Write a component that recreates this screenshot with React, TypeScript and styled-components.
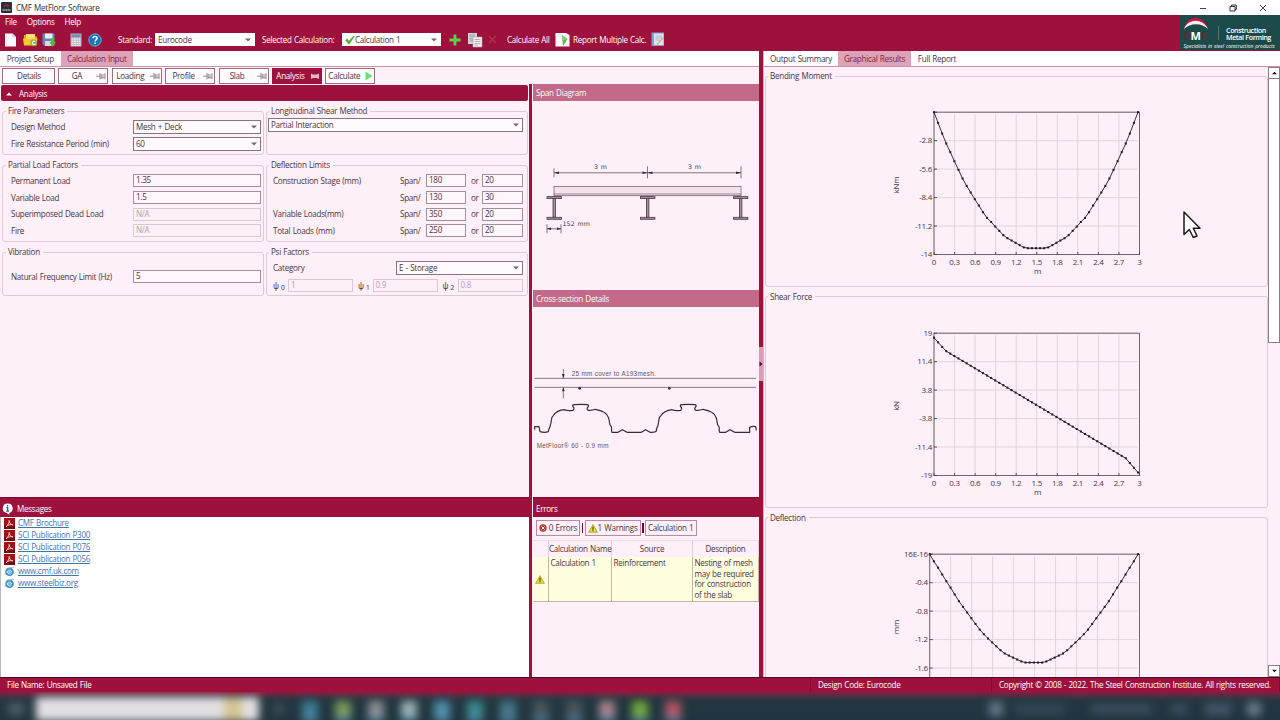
import {FC, ReactNode} from "react";
import styled, {createGlobalStyle, css} from "styled-components";

const colors = {
  crimson: "#9e113c",
  crimsonDark: "#7d0b30",
  rose: "#c26a87",
  tab: "#dea3b8",
  pink: "#fdf0f8",
  text: "#4c3440",
  border: "#e0c8d5"
};

const GlobalStyle = createGlobalStyle`
  * {
    box-sizing: border-box;
  }

  body {
    margin: 0;
    overflow: hidden;
    background-color: ${colors.pink};
    font-family: "Open Sans", "Noto Sans", sans-serif;
    font-size: 8.1px;
    letter-spacing: -0.28px;
    word-spacing: 0.5px;
    line-height: 12px;
    color: ${colors.text};
  }
`;

const Window = styled.div`
  width: 1280px;
  height: 720px;
  display: flex;
  flex-direction: column;
  overflow: hidden;
  white-space: nowrap;
`;

const TitleBar = styled.div`
  height: 15px;
  display: flex;
  align-items: center;
  gap: 4px;
  padding: 0 13px 0 1px;
  background-color: white;
  color: #333;
`;

const WindowButtons = styled.div`
  display: flex;
  gap: 22px;
  margin-left: auto;
`;

const Header = styled.header`
  height: 36px;
  display: flex;
  justify-content: space-between;
  background-color: ${colors.crimson};
  color: white;
`;

const MenuBar = styled.nav`
  height: 14px;
  display: flex;
  align-items: center;
  gap: 10px;
  padding-left: 5px;
`;

const ToolBar = styled.div`
  height: 21px;
  display: flex;
  align-items: center;
  padding-left: 4px;
`;

const Slot = styled.div<{ w: number }>`
  width: ${props => props.w}px;
  flex: none;
  display: flex;
  align-items: center;
`;

const Brand = styled.div`
  width: 100px;
  height: 35px;
  background-color: #1c4a48;
`;

const ComboBox = styled.div<{ w?: number, plain?: boolean, h?: number }>`
  width: ${props => props.w ? props.w + "px" : "100%"};
  height: ${props => props.h || 14}px;
  flex: none;
  display: flex;
  align-items: center;
  padding: 0 3px ${props => props.plain ? 0 : 1}px 2px;
  background-color: ${props => props.plain ? "white" : "#fffafd"};
  border: 1px solid ${props => props.plain ? "#fff" : "#85757f"};
  color: ${colors.text};

  & > svg:last-child {
    margin-left: auto;
  }
`;

const Main = styled.div`
  height: 626px;
  display: flex;
`;

const Workspace = styled.div`
  width: 759px;
  display: flex;
  flex-direction: column;
`;

const Tabs = styled.div`
  height: 16px;
  flex: none;
  display: flex;
  background-color: white;
  border-bottom: 1px solid #d78ba6;
`;

const Tab = styled.div<{ w: number, active?: boolean }>`
  width: ${props => props.w}px;
  height: 15px;
  line-height: 15px;
  text-align: center;
  background-color: ${props => props.active ? colors.tab : "white"};
  color: ${props => props.active ? "#7a1f42" : colors.text};
`;

const Steps = styled.div`
  height: 17px;
  flex: none;
  display: flex;
  gap: 3.4px;
  padding: 1px 0 0 2px;
`;

const Step = styled.div<{ active?: boolean, centered?: boolean }>`
  width: ${props => props.centered ? 53 : 50}px;
  height: 16px;
  display: flex;
  align-items: center;
  justify-content: ${props => props.centered ? "center" : "space-between"};
  padding: 0 1px 1px 2px;
  border: 1px solid ${props => props.active ? colors.crimson : "#8d7480"};
  background-color: ${props => props.active ? colors.crimson : "#fffafd"};
  color: ${props => props.active ? "white" : colors.text};

  & > span {
    flex: 1;
    padding-right: 4px;
    text-align: center;
  }
`;

const Columns = styled.div`
  flex: 1;
  display: flex;
  min-height: 0;
`;

const LeftColumn = styled.div`
  width: 529px;
  display: flex;
  flex-direction: column;
`;

const MiddleColumn = styled.div`
  width: 230px;
  display: flex;
  flex-direction: column;
  border-left: 3px solid ${colors.crimson};
  padding-left: 1px;
`;

const AnalysisHeader = styled.div`
  height: 16px;
  flex: none;
  display: flex;
  align-items: center;
  gap: 7px;
  margin: 1px 1px 0;
  padding: 1px 0 0 5px;
  border-radius: 2px;
  background-color: ${colors.crimson};
  color: white;
`;

const Form = styled.div`
  height: 396px;
  flex: none;
  display: grid;
  grid-template-columns: 262px 262px;
  grid-template-rows: 50px 83px 50px;
  gap: 4px 2px;
  align-content: start;
  padding: 4px 0 0 2px;
`;

const GroupBox = styled.fieldset<{ h?: number, narrow?: boolean }>`
  min-width: 0;
  margin: 0;
  padding: 0 0 0 ${props => props.narrow ? 1 : 3}px;
  border: 1px solid ${colors.border};
  border-radius: 3px;
  ${props => props.h && css`
    height: ${props.h}px;
    flex: none;
    padding: 0;
  `}
`;

const Legend = styled.legend<{ indent?: number }>`
  height: 12px;
  margin-left: ${props => props.indent || 0}px;
  padding: 0 3px 0 2px;
`;

const Row = styled.div<{ top?: number }>`
  height: 16.7px;
  display: flex;
  align-items: center;
  margin-top: ${props => props.top || 0}px;
  padding-left: 5px;
`;

const FlushRow = styled(Row)`
  padding-left: 0;
`;

const Label = styled.span<{ w: number }>`
  width: ${props => props.w}px;
  flex: none;
`;

const OrLabel = styled(Label)`
  padding-left: 5px;
`;

const PsiLabel = styled(Label)`
  padding-left: ${props => props.w > 15 ? 5 : 0}px;
  padding-top: 2px;
  font-family: "Noto Sans", sans-serif;
  letter-spacing: 0;

  & > sub {
    font-size: 6.5px;
    line-height: 0;
    vertical-align: -0.5px;
    margin-left: 2px;
  }
`;

const Field = styled.div<{ w: number, disabled?: boolean }>`
  width: ${props => props.w}px;
  height: 13px;
  flex: none;
  padding-left: 2px;
  line-height: 10.5px;
  border: 1px solid ${props => props.disabled ? "#dcc8d3" : "#a38f9a"};
  color: ${props => props.disabled ? "#b5a2ad" : colors.text};
  background-color: ${props => props.disabled ? colors.pink : "#fff6fb"};
`;

const PanelTitle = styled.div`
  height: 17px;
  flex: none;
  padding-left: 3px;
  line-height: 17px;
  background-color: ${colors.rose};
  color: white;
`;

const Drawing = styled.svg`
  display: block;
  flex: none;
`;

const DockTitle = styled.div`
  height: 19.5px;
  flex: none;
  display: flex;
  align-items: center;
  gap: 4px;
  padding: 3px 0 0 2px;
  border-top: 1px solid ${colors.crimsonDark};
  background-color: ${colors.crimson};
  color: white;
`;

const ErrorsTitle = styled(DockTitle)`
  padding-left: 3px;
`;

const Messages = styled.div`
  flex: 1;
  padding-top: 0.5px;
  background-color: white;
  border-left: 1px solid #bbb;
`;

const MessageLink = styled.div`
  height: 12px;
  display: flex;
  align-items: center;
  gap: 3px;
  padding-left: 3px;

  & > a {
    color: #3f76ad;
    text-decoration: underline;
    text-underline-offset: 1px;
  }
`;

const ErrorFilters = styled.div`
  height: 23.5px;
  flex: none;
  display: flex;
  align-items: center;
  gap: 1.5px;
  padding-left: 3px;
`;

const FilterButton = styled.div<{ w: number }>`
  width: ${props => props.w}px;
  height: 16px;
  display: flex;
  align-items: center;
  justify-content: space-between;
  padding: 0 2px;
  border: 1px solid #b98aa0;
`;

const FilterDivider = styled.div`
  width: 1.5px;
  height: 10px;
  background-color: ${colors.crimsonDark};
`;

const ErrorGrid = styled.div`
  display: grid;
  grid-template-columns: 16px 63px 81px 66px;
  grid-template-rows: 16px 45px;
  border-top: 1px solid #eedbe5;
`;

const ErrorHead = styled.div`
  text-align: center;
  line-height: 16px;
  border-right: 1px solid #e3cdd8;
`;

const ErrorCell = styled.div`
  padding: 1px 0 0 1.5px;
  line-height: 10.7px;
  white-space: pre-line;
  background-color: #ffffe0;
  border-right: 1px solid #c9b3a4;
  border-bottom: 1px solid #c9b3a4;
`;

const ErrorIconCell = styled(ErrorCell)`
  display: flex;
  align-items: center;
  padding: 0 0 0 2px;
`;

const Splitter = styled.div`
  width: 5px;
  display: flex;
  align-items: center;
  background-color: ${colors.crimson};
  border-right: 1px solid #e5a9bf;
`;

const SplitterGrip = styled.div`
  width: 4px;
  height: 34px;
  display: flex;
  align-items: center;
  background-color: #e09ab4;
`;

const Results = styled.div`
  width: 516px;
  display: flex;
  flex-direction: column;
`;

const ResultsBody = styled.div`
  flex: 1;
  min-height: 0;
  display: flex;
`;

const ChartList = styled.div`
  width: 504px;
  display: flex;
  flex-direction: column;
  gap: 3.6px;
  padding: 3.4px 0 0 1px;
  overflow: hidden;
`;

const ScrollBar = styled.div`
  width: 12px;
  display: flex;
  flex-direction: column;
`;

const ScrollButton = styled.div`
  height: 12px;
  display: flex;
  align-items: center;
  justify-content: center;
  border: 1px solid #8b7b84;
  background-color: white;
`;

const ScrollThumb = styled.div`
  height: 264px;
  margin-bottom: auto;
  border: 1px solid #8b7b84;
  border-top: 0;
  background-color: white;
`;

const StatusBar = styled.footer`
  height: 15px;
  flex: none;
  display: flex;
  border-top: 1px solid #52091f;
  background-color: ${colors.crimson};
  color: white;
`;

const StatusItem = styled.div<{ w: number }>`
  width: ${props => props.w}px;
  padding-left: 7px;
  line-height: 14px;
  border-right: 1px solid #830c31;
`;

const TaskBar = styled.div`
  height: 28px;
  flex: none;
  overflow: hidden;
  background: linear-gradient(#8c1a3e 0, #5b2c41 3px, #2f3642 7px, #233741 10px, #20353f 100%);
`;

const TaskBarItems = styled.div`
  height: 28px;
  display: flex;
  align-items: center;
  padding: 5px 0 0 8px;
  filter: blur(4px);
`;

const TaskItem = styled.div<{ w: number, h?: number, color: string, gap?: number, open?: boolean }>`
  width: ${props => props.w}px;
  height: ${props => props.h || 14}px;
  flex: none;
  margin-left: ${props => props.gap || 0}px;
  background-color: ${props => props.color};
  box-shadow: ${props => props.open ? "0 5px 0 #4f86a6" : "none"};
`;

const Cursor = styled.svg`
  position: absolute;
  left: 1182px;
  top: 210px;
`;

const Arrow: FC<{ up?: boolean, color?: string, size?: number }> = ({up, color = "#75646e", size = 6}) => (
  <svg width={size} height="4" viewBox="0 0 6 4">
    <path d={up ? "M0 3.5L3 .5L6 3.5Z" : "M0 .5H6L3 3.5Z"} fill={color}/>
  </svg>
);

const Pin: FC<{ active?: boolean }> = ({active}) => (
  <svg width="10" height="8" viewBox="0 0 10 8">
    {active
      ? <path d="M1 1.5L3 2.5H7L9 1.5V7L7 6H3L1 7Z" fill="#e6b9c8"/>
      : <path d="M0 4.2H4M4 1V7.4M5 2V6.5M5 3H8.6M5 5H8.6M5 5.9H8.6M9 1.2V7.2" stroke="#8f8289" strokeWidth=".9" fill="none"/>}
  </svg>
);

const WarningIcon = () => (
  <svg width="10" height="9" viewBox="0 0 10 9">
    <path d="M5 .6L9.5 8.3H.5Z" fill="#e6df2c" stroke="#9c9830" strokeWidth=".7" strokeLinejoin="round"/>
    <path d="M5 2.8V5.7M5 6.3V7.3" stroke="#3b3a16" strokeWidth="1.1"/>
  </svg>
);

const PdfIcon = () => (
  <svg width="11" height="11" viewBox="0 0 11 11">
    <rect width="11" height="11" fill="#a60f14"/>
    <rect y="7" width="11" height="4" fill="#7d0a10"/>
    <path d="M2 8.8C4 7.4 5.4 4.6 5.2 2.4C5.2 4.8 6.6 6.6 9 6.9C6.6 6.3 4 6.8 2 8.8Z" fill="none" stroke="#f3d5d5" strokeWidth=".9"/>
  </svg>
);

const WebIcon = () => (
  <svg width="11" height="11" viewBox="0 0 11 11">
    <circle cx="5.5" cy="5.8" r="4.3" fill="#3a8cc0"/>
    <path d="M3.3 6H7.7C7.6 3.5 3.6 3.4 3.3 6C3.4 8.3 6.6 8.6 7.6 7.2" fill="none" stroke="#d7f1fb" strokeWidth="1"/>
    <path d="M1 8.8C2 4.5 6 1 10.2 1.2" fill="none" stroke="#7cb6d8" strokeWidth=".9"/>
  </svg>
);

const NewIcon = () => (
  <svg width="13" height="14" viewBox="0 0 13 14">
    <path d="M1 .5H8.5L12 4V13.5H1Z" fill="#fdfbfc"/>
    <path d="M8.5 .5V4H12Z" fill="#d5c8cd"/>
  </svg>
);

const OpenIcon = () => (
  <svg width="15" height="14" viewBox="0 0 15 14">
    <path d="M1 2H6L7 3.5H14V12H1Z" fill="#e2a91c"/>
    <path d="M3 1H12V6H3Z" fill="#f5df7a"/>
    <path d="M0 5.5H14.5L13.5 12.5H1Z" fill="#f6c92f"/>
    <circle cx="10.8" cy="9.8" r="3.4" fill="#86b83a"/>
    <path d="M12.4 8.6C10.8 7.4 9 8.8 9.4 10.4C9.8 11.8 11.8 11.8 12.4 10.8" fill="none" stroke="#fff" strokeWidth="1.1"/>
  </svg>
);

const SaveIcon = () => (
  <svg width="14" height="14" viewBox="0 0 14 14">
    <path d="M.5 .5H12.5V12.5H2L.5 11Z" fill="#5f89ae"/>
    <rect x="3" y=".5" width="7.5" height="5" fill="#e9f0f5"/>
    <rect x="3" y="8" width="6.5" height="5" fill="#cfdbe4"/>
    <path d="M9.2 5H12.2V9H14L10.7 13.7L7.3 9H9.2Z" fill="#54bb3f"/>
  </svg>
);

const CalculatorIcon = () => (
  <svg width="12" height="14" viewBox="0 0 12 14">
    <rect x=".5" y=".5" width="11" height="13" fill="#b8b0ba"/>
    <rect x="1.5" y="1.5" width="9" height="2.6" fill="#6d92b8"/>
    <path d="M1.5 6H10.5M1.5 8.2H10.5M1.5 10.4H10.5M1.5 12.4H10.5" stroke="#ece8ec" strokeWidth="1.4" strokeDasharray="2 .5"/>
  </svg>
);

const HelpIcon = () => (
  <svg width="14" height="14" viewBox="0 0 14 14">
    <circle cx="7" cy="7" r="6.2" fill="#1477b5" stroke="#73b5da" strokeWidth=".9"/>
    <path d="M4.9 5.3C5 2.8 9.3 2.9 9.1 5.3C9 6.6 7.1 6.7 7.1 8.5M7.1 9.6V11" fill="none" stroke="#fff" strokeWidth="1.5"/>
  </svg>
);

const CheckIcon = () => (
  <svg width="10" height="10" viewBox="0 0 9 9">
    <path d="M.2 4.6L2.2 3.2L3.4 5.3L8 .4L8.9 1L3.6 8.8Z" fill="#58a62b"/>
  </svg>
);

const CopyIcon = () => (
  <svg width="16" height="16" viewBox="0 0 16 16">
    <path d="M1 1H10V12H1Z" fill="#d9d4d9"/>
    <path d="M2.5 3H8M2.5 5H8M2.5 7H8M2.5 9H8" stroke="#8d8790" strokeWidth=".8"/>
    <path d="M6 5H15V15H6Z" fill="#f1eff2" stroke="#b3a9b1" strokeWidth=".6"/>
    <path d="M7.5 7.5H13.5M7.5 9.5H13.5M7.5 11.5H13.5M7.5 13.2H11" stroke="#a8a3ab" strokeWidth=".8"/>
  </svg>
);

const RunIcon = () => (
  <svg width="15" height="15" viewBox="0 0 15 15">
    <path d="M.5 1H11L14.5 3V14.5H.5Z" fill="#fcf9fb"/>
    <path d="M7 3L12.5 7L8 14Z" fill="#62b34c"/>
    <path d="M7 3L12.5 7L7 9Z" fill="#8fd079"/>
  </svg>
);

const ReportIcon = () => (
  <svg width="14" height="15" viewBox="0 0 14 15">
    <rect x=".5" y=".5" width="12.5" height="13.5" fill="#7ba3cd"/>
    <rect x="3" y="1.5" width="9.5" height="11.5" fill="#dde6ef"/>
    <path d="M4.5 4H11M4.5 6H11M4.5 8H9" stroke="#9db3c9" strokeWidth=".8"/>
    <path d="M12.8 6L6.8 12.6L5.6 13.4L6 12L12 5.3Z" fill="#e3a04a"/>
  </svg>
);

const InfoIcon = () => (
  <svg width="11" height="12" viewBox="0 0 11 12">
    <path d="M5.5 .5A4.8 4.8 0 0 1 7.2 9.9L7.6 11.7L4.6 10A4.8 4.8 0 0 1 5.5 .5Z" fill="#f5f8fc"/>
    <path d="M5.5 2V3.5M4.4 4.7H5.7V8M4.2 8.2H7" stroke="#2d5c9c" strokeWidth="1.3" fill="none"/>
  </svg>
);

const BrandLogo = () => (
  <Drawing width="100" height="35" viewBox="0 0 100 35" fontFamily="Open Sans, sans-serif">
    <path d="M4 14C7 -1 24 -1 28 14C22 7 10 7 4 14Z" fill="#c8143f"/>
    <path d="M4 14C8 3 23 3 28 14C22 7.5 10 7.5 4 14Z" fill="#f6eef0"/>
    <text x="3.5" y="25" fontSize="10" fontWeight="700" fill="#7a1a3a">C</text>
    <text x="10.5" y="25" fontSize="11" fontWeight="700" fill="#fff">M</text>
    <text x="21.5" y="25" fontSize="10" fontWeight="700" fill="#7a1a3a">F</text>
    <path d="M38.5 11V25" stroke="#6f8b89" strokeWidth=".7"/>
    <g fill="#fff">
      <text x="46" y="17.5" fontSize="7.2" fontWeight="600" textLength="40">Construction</text>
      <text x="46" y="25" fontSize="7.2" fontWeight="600" textLength="45">Metal Forming</text>
      <text x="3.5" y="32.7" fontSize="5" fontStyle="italic" textLength="91">Specialists in steel construction products</text>
    </g>
  </Drawing>
);

const Beam: FC<{ x: number }> = ({x}) => (
  <g fill="#a58d9b" stroke="#4b3a44" strokeWidth=".8">
    <rect x={x - 1} y="98" width="2.4" height="19"/>
    <rect x={x - 7} y="96.3" width="14.4" height="2"/>
    <rect x={x - 7} y="117" width="14.4" height="2"/>
  </g>
);

const SpanDiagram = () => (
  <Drawing width="226" height="189" viewBox="0 .7 226 189" fontFamily="DejaVu Sans, sans-serif" fontSize="6.3">
    <rect x="21" y="86.3" width="187" height="7.4" fill="#f6e0ec" stroke="#6d5964" strokeWidth=".7"/>
    <path d="M21 95.3H208M21 93.7V95.3M208 93.7V95.3" stroke="#6d5964" strokeWidth=".8"/>
    <path d="M21 68V77M114.5 66V78M208 66V78M21 72.5H208" stroke="#51404a" strokeWidth=".7"/>
    <path d="M21 72.5L26 71.2V73.8ZM114.5 72.5L109.5 71.2V73.8ZM114.5 72.5L119.5 71.2V73.8ZM208 72.5L203 71.2V73.8Z" fill="#33232c"/>
    <Beam x={21}/>
    <Beam x={114.5}/>
    <Beam x={207.5}/>
    <path d="M14 124V133M28 124V133M14 128.5H28" stroke="#51404a" strokeWidth=".7"/>
    <path d="M14 128.5L18 127.3V129.7ZM28 128.5L24 127.3V129.7Z" fill="#33232c"/>
    <g fill="#4c3440">
      <text x="61" y="69.2" textLength="12.5">3 m</text>
      <text x="155" y="69.2" textLength="12.5">3 m</text>
      <text x="29.5" y="125.5" textLength="27">152 mm</text>
    </g>
  </Drawing>
);

const CrossSection = () => (
  <Drawing width="226" height="190" viewBox="15 51 678 570" fontFamily="Liberation Sans, sans-serif" fontSize="19">
    <path d="M20 265H684M20 292H684M106 237V265M106 292V325" stroke="#6d5964" strokeWidth="2.4"/>
    <path d="M106 265L102 252H110ZM106 292L102 304H110Z" fill="#33232c"/>
    <circle cx="155" cy="295" r="4" fill="#33232c"/>
    <circle cx="424" cy="295" r="4" fill="#33232c"/>
    <path
      d="M20 419V410H33L36 425Q50 429 61 425C62 412 68 412 67 405C72 394 68 382 75 378Q86 360 110 359Q116 363 135 361C140 356 138 352 135 350Q132 345 138 344Q160 342 178 344Q184 346 180 351C176 355 177 359 180 361Q194 362 202 358Q236 364 241 382C246 394 243 404 248 407C254 410 248 418 252 427H270L283 419L297 427H340L353 419L366 427Q382 428 385 423C384 412 391 410 390 405C394 394 390 382 398 378Q408 362 432 359Q440 363 458 361C463 356 461 352 458 350Q455 345 461 344Q483 342 501 344Q507 346 503 351C499 355 500 359 503 361Q517 362 525 358Q559 364 564 382C569 394 566 404 571 407C577 410 571 418 575 427H593L606 419L620 427H665V412Q674 408 683 410L685 421"
      fill="none"
      stroke="#3a2a34"
      strokeWidth="3.6"
      strokeLinejoin="round"
    />
    <g fill="#65505c">
      <text x="131" y="258" textLength="252">25 mm cover to A193mesh.</text>
      <text x="26" y="474" textLength="215">MetFloor® 60 - 0.9 mm</text>
    </g>
  </Drawing>
);

interface ChartProps {
  title: string,
  unit: string,
  values: number[],
  max: number,
  min: number,
  ticks: string[],
  left?: number,
  hideXLabels?: boolean
}

const PLOT_TOP = 30.2;
const PLOT_HEIGHT = 142.3;
const PLOT_RIGHT = 373.5;

const mirror = (half: number[]) => [...half, ...half.slice(0, -1).reverse()];

const bending = mirror([0, -1.05, -2.1, -3.08, -3.93, -4.82, -5.67, -6.52, -7.25, -7.9, -8.56, -9.18, -9.84, -10.4, -10.8, -11.25,
  -11.67, -12.1, -12.4, -12.62, -12.85, -13.08, -13.3, -13.38, -13.38, -13.38]);
const shear = Array.from({length: 51}, (_, i) => {
  if (i < 3) return 17.8 - i * 1.23;
  if (i > 47) return -14.4 - (i - 47) * 1.27;
  return 14.2 - (i - 3) * 0.65;
});
const deflection = mirror([0, -0.1, -0.19, -0.285, -0.38, -0.47, -0.565, -0.66, -0.74, -0.82, -0.9, -0.98, -1.06, -1.125, -1.185,
  -1.24, -1.295, -1.35, -1.395, -1.425, -1.453, -1.48, -1.507, -1.523, -1.523, -1.523]);

const Chart: FC<ChartProps> = ({title, unit, values, max, min, ticks, left = 168, hideXLabels}) => {
  const width = PLOT_RIGHT - left;
  const points = values.map((value, i) => [
    left + i * (width - 1.5) / (values.length - 1),
    PLOT_TOP + (max - value) / (max - min) * PLOT_HEIGHT
  ]);
  const bottom = PLOT_TOP + PLOT_HEIGHT;
  const xTicks = Array.from({length: 11}, (_, i) => ({
    x: left + i * width / 10,
    label: String(Number((i * 0.3).toFixed(1)))
  }));
  const yTicks = ticks.map((label, i) => ({y: PLOT_TOP + i * PLOT_HEIGHT / 5, label}));

  return (
    <GroupBox h={217}>
      <Legend indent={2}>{title}</Legend>
      <Drawing width="500" height="204" viewBox="0 0 500 204" fontSize="8" fill={colors.text}>
        <g stroke="#dccbd5" strokeWidth=".8">
          {xTicks.map(tick => <line key={tick.x} x1={tick.x} x2={tick.x} y1={PLOT_TOP + 2} y2={bottom}/>)}
          {yTicks.map(tick => <line key={tick.y} x1={left} x2={PLOT_RIGHT - 2} y1={tick.y} y2={tick.y}/>)}
        </g>
        <rect x={left} y={PLOT_TOP} width={width} height={PLOT_HEIGHT} fill="none" stroke="#74646d"/>
        <g stroke="#4a3a43" strokeWidth=".9">
          {xTicks.map(tick => <line key={tick.x} x1={tick.x} x2={tick.x} y1={bottom - 2.5} y2={bottom}/>)}
          {yTicks.map(tick => <line key={tick.y} x1={left} x2={left + 3} y1={tick.y} y2={tick.y}/>)}
        </g>
        {!hideXLabels && <>
          {xTicks.map(tick => <text key={tick.x} x={tick.x} y={bottom + 10} textAnchor="middle">{tick.label}</text>)}
          <text x="271.5" y={bottom + 19} textAnchor="middle">m</text>
        </>}
        {yTicks.map(tick => tick.label && (
          <text key={tick.y} x={left - 2} y={tick.y + 2.8} textAnchor="end">{tick.label}</text>
        ))}
        <text transform="translate(133 103) rotate(-90)" textAnchor="middle">{unit}</text>
        <polyline points={points.map(point => point.join(",")).join(" ")} fill="none" stroke="#3f2f38"/>
        {points.map(([x, y], i) => <rect key={i} x={x - 1} y={y - 1} width="2" height="2" fill="#22151c"/>)}
      </Drawing>
    </GroupBox>
  );
};

const LimitRow: FC<{ label?: string, span: string, or: string, top?: number }> = ({label, span, or, top}) => (
  <Row top={top}>
    <Label w={127}>{label}</Label>
    <Label w={26}>Span/</Label>
    <Field w={40}>{span}</Field>
    <OrLabel w={16}>or</OrLabel>
    <Field w={41}>{or}</Field>
  </Row>
);

const FactorRow: FC<{ label: string, value: string, disabled?: boolean, top?: number }> = ({label, value, disabled, top}) => (
  <Row top={top}>
    <Label w={122}>{label}</Label>
    <Field w={128} disabled={disabled}>{value}</Field>
  </Row>
);

const Group: FC<{ title: string, narrow?: boolean, children: ReactNode }> = ({title, narrow, children}) => (
  <GroupBox narrow={narrow}>
    <Legend indent={narrow ? 1 : 0}>{title}</Legend>
    {children}
  </GroupBox>
);

const AnalysisForm = () => (
  <Form>
    <Group title="Fire Parameters">
      <Row top={2}>
        <Label w={122}>Design Method</Label>
        <ComboBox w={128}>Mesh + Deck<Arrow/></ComboBox>
      </Row>
      <Row>
        <Label w={122}>Fire Resistance Period (min)</Label>
        <ComboBox w={128}>60<Arrow/></ComboBox>
      </Row>
    </Group>
    <Group title="Longitudinal Shear Method" narrow>
      <FlushRow>
        <ComboBox w={255}>Partial Interaction<Arrow/></ComboBox>
      </FlushRow>
    </Group>
    <Group title="Partial Load Factors">
      <FactorRow top={1.5} label="Permanent Load" value="1.35"/>
      <FactorRow label="Variable Load" value="1.5"/>
      <FactorRow label="Superimposed Dead Load" value="N/A" disabled/>
      <FactorRow label="Fire" value="N/A" disabled/>
    </Group>
    <Group title="Deflection Limits" narrow>
      <LimitRow top={1.5} label="Construction Stage (mm)" span="180" or="20"/>
      <LimitRow span="130" or="30"/>
      <LimitRow label="Variable Loads(mm)" span="350" or="20"/>
      <LimitRow label="Total Loads (mm)" span="250" or="20"/>
    </Group>
    <Group title="Vibration">
      <FactorRow top={10.5} label="Natural Frequency Limit (Hz)" value="5"/>
    </Group>
    <Group title="Psi Factors" narrow>
      <Row top={2}>
        <Label w={123}>Category</Label>
        <ComboBox w={127}>E - Storage<Arrow/></ComboBox>
      </Row>
      <Row>
        <PsiLabel w={15}>ψ<sub>0</sub></PsiLabel>
        <Field w={65} disabled>1</Field>
        <PsiLabel w={19.5}>ψ<sub>1</sub></PsiLabel>
        <Field w={65} disabled>0.9</Field>
        <PsiLabel w={20}>ψ<sub>2</sub></PsiLabel>
        <Field w={65} disabled>0.8</Field>
      </Row>
    </Group>
  </Form>
);

const documents = ["CMF Brochure", "SCI Publication P300", "SCI Publication P076", "SCI Publication P056"];
const sites = ["www.cmf.uk.com", "www.steelbiz.org"];
const steps = ["GA", "Loading", "Profile", "Slab", "Analysis"];
const taskIcons = ["#3f7f98", "#7d9b5d", "#8e9092", "#9ab2b4", "#5190ad", "#3d8b91", "#467887", "#4b565c", "#4b565c", "#a9828a", "#76a83d", "#b45563"];

const App: FC = () => (
  <Window>
    <GlobalStyle/>
    <TitleBar>
      <svg width="11" height="11" viewBox="0 0 11 11">
        <rect width="11" height="11" rx="1" fill="#263238"/>
        <path d="M2 4.5Q5.5 0 9 4.5Z" fill="#a3193f"/>
        <path d="M1.5 8H9.5" stroke="#aeb9bb" strokeWidth="1.6" strokeDasharray="1.3 .4"/>
      </svg>
      CMF MetFloor Software
      <WindowButtons>
        <svg width="8" height="8" viewBox="0 0 8 8"><path d="M1 4.5H7" stroke="#444"/></svg>
        <svg width="8" height="8" viewBox="0 0 8 8"><path d="M1 2.5H6V7H1ZM2.5 2.5V1H7.3V5.5H6" fill="none" stroke="#333"/></svg>
        <svg width="8" height="8" viewBox="0 0 8 8"><path d="M1 1L7 7M7 1L1 7" stroke="#333" strokeWidth=".9"/></svg>
      </WindowButtons>
    </TitleBar>
    <Header>
      <div>
        <MenuBar>
          <span>File</span>
          <span>Options</span>
          <span>Help</span>
        </MenuBar>
        <ToolBar>
          <Slot w={19}><NewIcon/></Slot>
          <Slot w={19}><OpenIcon/></Slot>
          <Slot w={28}><SaveIcon/></Slot>
          <Slot w={18}><CalculatorIcon/></Slot>
          <Slot w={30}><HelpIcon/></Slot>
          <Slot w={37}>Standard:</Slot>
          <Slot w={107}><ComboBox w={100} h={13} plain>Eurocode<Arrow/></ComboBox></Slot>
          <Slot w={80}>Selected Calculation:</Slot>
          <Slot w={107}><ComboBox w={99} h={13} plain><CheckIcon/>Calculation 1<Arrow/></ComboBox></Slot>
          <Slot w={18}>
            <svg width="12" height="12" viewBox="0 0 12 12"><path d="M6 .5V11.5M.5 6H11.5" stroke="#62cf4b" strokeWidth="2.8"/></svg>
          </Slot>
          <Slot w={21}><CopyIcon/></Slot>
          <Slot w={19}>
            <svg width="9" height="9" viewBox="0 0 9 9"><path d="M1 1L8 8M8 1L1 8" stroke="#b0344f" strokeWidth="1.3"/></svg>
          </Slot>
          <Slot w={48}>Calculate All</Slot>
          <Slot w={18}><RunIcon/></Slot>
          <Slot w={78}>Report Multiple Calc.</Slot>
          <Slot w={16}><ReportIcon/></Slot>
        </ToolBar>
      </div>
      <Brand><BrandLogo/></Brand>
    </Header>
    <Main>
      <Workspace>
        <Tabs>
          <Tab w={60.5}>Project Setup</Tab>
          <Tab w={72.5} active>Calculation Input</Tab>
        </Tabs>
        <Steps>
          <Step centered>Details</Step>
          {steps.map(step => (
            <Step key={step} active={step === "Analysis"}>
              <span>{step}</span>
              <Pin active={step === "Analysis"}/>
            </Step>
          ))}
          <Step>
            Calculate
            <svg width="8" height="10" viewBox="0 0 8 10"><path d="M.5 .5L7.5 5L.5 9.5Z" fill="#6fe26c"/></svg>
          </Step>
        </Steps>
        <Columns>
          <LeftColumn>
            <AnalysisHeader><Arrow up color="#fff"/>Analysis</AnalysisHeader>
            <AnalysisForm/>
            <DockTitle><InfoIcon/>Messages</DockTitle>
            <Messages>
              {documents.map(name => <MessageLink key={name}><PdfIcon/><a>{name}</a></MessageLink>)}
              {sites.map(name => <MessageLink key={name}><WebIcon/><a>{name}</a></MessageLink>)}
            </Messages>
          </LeftColumn>
          <MiddleColumn>
            <PanelTitle>Span Diagram</PanelTitle>
            <SpanDiagram/>
            <PanelTitle>Cross-section Details</PanelTitle>
            <CrossSection/>
            <ErrorsTitle>Errors</ErrorsTitle>
            <ErrorFilters>
              <FilterButton w={44}>
                <svg width="8" height="8" viewBox="0 0 8 8">
                  <circle cx="4" cy="4" r="3.7" fill="#c03a2e"/>
                  <path d="M2.5 2.5L5.5 5.5M5.5 2.5L2.5 5.5" stroke="#fff"/>
                </svg>
                0 Errors
              </FilterButton>
              <FilterDivider/>
              <FilterButton w={56}><WarningIcon/>1 Warnings</FilterButton>
              <FilterDivider/>
              <FilterButton w={52}>Calculation 1</FilterButton>
            </ErrorFilters>
            <ErrorGrid>
              <ErrorHead/>
              <ErrorHead>Calculation Name</ErrorHead>
              <ErrorHead>Source</ErrorHead>
              <ErrorHead>Description</ErrorHead>
              <ErrorIconCell><WarningIcon/></ErrorIconCell>
              <ErrorCell>Calculation 1</ErrorCell>
              <ErrorCell>Reinforcement</ErrorCell>
              <ErrorCell>{"Nesting of mesh\nmay be required\nfor construction\nof the slab"}</ErrorCell>
            </ErrorGrid>
          </MiddleColumn>
        </Columns>
      </Workspace>
      <Splitter>
        <SplitterGrip>
          <svg width="4" height="6" viewBox="0 0 4 6"><path d="M.5 .5L3.5 3L.5 5.5Z" fill="#4a1026"/></svg>
        </SplitterGrip>
      </Splitter>
      <Results>
        <Tabs>
          <Tab w={74}>Output Summary</Tab>
          <Tab w={73} active>Graphical Results</Tab>
          <Tab w={52}>Full Report</Tab>
        </Tabs>
        <ResultsBody>
          <ChartList>
            <Chart title="Bending Moment" unit="kNm" values={bending} max={0} min={-14}
                   ticks={["", "-2.8", "-5.6", "-8.4", "-11.2", "-14"]}/>
            <Chart title="Shear Force" unit="kN" values={shear} max={19} min={-19}
                   ticks={["19", "11.4", "3.8", "-3.8", "-11.4", "-19"]}/>
            <Chart title="Deflection" unit="mm" values={deflection} max={0} min={-2} left={163.7} hideXLabels
                   ticks={["16E-16", "-0.4", "-0.8", "-1.2", "-1.6"]}/>
          </ChartList>
          <ScrollBar>
            <ScrollButton><Arrow up color="#111" size={5}/></ScrollButton>
            <ScrollThumb/>
            <ScrollButton><Arrow color="#111" size={5}/></ScrollButton>
          </ScrollBar>
        </ResultsBody>
      </Results>
    </Main>
    <StatusBar>
      <StatusItem w={811}>File Name: Unsaved File</StatusItem>
      <StatusItem w={181}>Design Code: Eurocode</StatusItem>
      <StatusItem w={288}>Copyright © 2008 - 2022. The Steel Construction Institute. All rights reserved.</StatusItem>
    </StatusBar>
    <TaskBar>
      <TaskBarItems>
        <TaskItem w={16} h={12} color="#4d5d64"/>
        <TaskItem w={188} h={24} gap={12} color="#e3e0e3"/>
        <TaskItem w={18} h={24} color="#d5c596"/>
        <TaskItem w={17} h={24} color="#e3e0e3"/>
        <TaskItem w={12} h={12} gap={14} color="#3a4b54"/>
        {taskIcons.map((color, i) => <TaskItem key={i} w={16} h={16} gap={17} color={color} open/>)}
        <TaskItem w={14} gap={308} color="#62778b"/>
        <TaskItem w={50} h={10} gap={12} color="#33475a"/>
        <TaskItem w={60} h={10} gap={26} color="#3b4e60"/>
        <TaskItem w={16} h={10} gap={20} color="#3b4e60"/>
        <TaskItem w={26} h={12} gap={18} color="#44566a"/>
        <TaskItem w={14} gap={16} color="#697887"/>
      </TaskBarItems>
    </TaskBar>
    <Cursor width="22" height="30" viewBox="0 0 22 30">
      <path d="M2 2V24.5L7.3 19.5L11.3 27.5L15 26L11.3 18.3H18Z" fill="#fff" stroke="#1d161a" strokeWidth="1.5" strokeLinejoin="round"/>
    </Cursor>
  </Window>
);

export default App;
